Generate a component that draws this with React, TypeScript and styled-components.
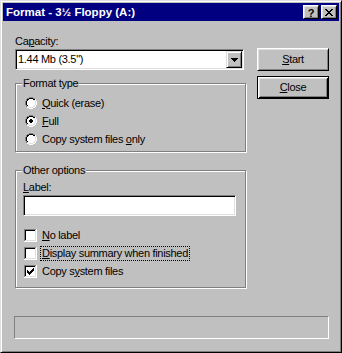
import React from 'react';
import styled, { createGlobalStyle } from 'styled-components';

const GlobalStyle = createGlobalStyle`
  html, body { margin: 0; padding: 0; background: #c0c0c0; }
  body { font-family: "Liberation Sans", Arial, sans-serif; font-size: 11px; }
  *, *::before, *::after { box-sizing: border-box; }
  u { text-decoration: underline; text-underline-offset: 1px; }
`;

const Window = styled.div`
  width: 342px;
  height: 353px;
  background: #c0c0c0;
  border-top: 1px solid #dfdfdf;
  border-left: 1px solid #dfdfdf;
  border-right: 1px solid #000;
  border-bottom: 1px solid #000;
  box-shadow: inset 1px 1px 0 #fff, inset -1px -1px 0 #808080;
  padding: 2px;
  display: flex;
  flex-direction: column;
  font-family: "Liberation Sans", Arial, sans-serif;
  font-size: 11px;
  letter-spacing: -0.3px;
  color: #000;
`;

const TitleBar = styled.div`
  height: 18px;
  background: #000080;
  display: flex;
  align-items: center;
  padding: 0 2px 0 3px;
`;

const Title = styled.div`
  flex: 1;
  color: #fff;
  font-weight: bold;
  font-size: 11.5px;
  letter-spacing: 0;
  line-height: 18px;
  white-space: nowrap;
`;

const TitleButtons = styled.div`
  display: flex;
  gap: 2px;
`;

const TitleButton = styled.div`
  width: 16px;
  height: 14px;
  background: #c0c0c0;
  border-top: 1px solid #fff;
  border-left: 1px solid #fff;
  border-right: 1px solid #000;
  border-bottom: 1px solid #000;
  box-shadow: inset 1px 1px 0 #dfdfdf, inset -1px -1px 0 #808080;
  display: flex;
  align-items: center;
  justify-content: center;
`;

const HelpMark = styled.span`
  font-weight: bold;
  font-size: 11px;
  line-height: 12px;
  letter-spacing: 0;
  padding-top: 1px;
`;

const Body = styled.div`
  flex: 1;
  display: flex;
  flex-direction: column;
  padding: 14px 10px 0 11px;
`;

const MainRow = styled.div`
  display: flex;
  align-items: flex-start;
`;

const LeftColumn = styled.div`
  width: 231px;
  margin-left: 1px;
  display: flex;
  flex-direction: column;
`;

const RightColumn = styled.div`
  width: 72px;
  margin-left: 11px;
  margin-top: 13px;
  display: flex;
  flex-direction: column;
  gap: 5px;
`;

const FieldLabel = styled.div<{ $indent?: number }>`
  line-height: 13px;
  height: 13px;
  padding-left: ${p => p.$indent ?? 0}px;
  white-space: nowrap;
`;

const Sunken = styled.div`
  background: #fff;
  border-top: 1px solid #808080;
  border-left: 1px solid #808080;
  border-right: 1px solid #fff;
  border-bottom: 1px solid #fff;
  box-shadow: inset 1px 1px 0 #000, inset -1px -1px 0 #dfdfdf;
  padding: 1px;
`;

const Combo = styled(Sunken)`
  width: 229px;
  height: 21px;
  margin-top: 1px;
  display: flex;
`;

const ComboText = styled.div`
  flex: 1;
  line-height: 17px;
  padding-left: 1px;
  white-space: nowrap;
`;

const DropButton = styled.div`
  width: 16px;
  height: 17px;
  background: #c0c0c0;
  border-top: 1px solid #dfdfdf;
  border-left: 1px solid #dfdfdf;
  border-right: 1px solid #000;
  border-bottom: 1px solid #000;
  box-shadow: inset 1px 1px 0 #fff, inset -1px -1px 0 #808080;
  display: flex;
  align-items: center;
  justify-content: center;
`;

const TextField = styled(Sunken)`
  width: 213px;
  height: 21px;
  margin: 1px 0 0 7px;
`;

const GroupBox = styled.div<{ $height: number; $gap: number }>`
  position: relative;
  height: ${p => p.$height}px;
  margin-top: ${p => p.$gap}px;
  border: 1px solid #808080;
  box-shadow: inset 1px 1px 0 #fff, 1px 1px 0 #fff;
  display: flex;
  flex-direction: column;
`;

const Legend = styled.div`
  position: absolute;
  top: -7px;
  left: 6px;
  padding: 0 1px;
  background: #c0c0c0;
  line-height: 13px;
  white-space: nowrap;
`;

const OptionList = styled.div<{ $top: number }>`
  margin-top: ${p => p.$top}px;
  display: flex;
  flex-direction: column;
`;

const OptionRow = styled.div<{ $indent: number }>`
  height: 18px;
  display: flex;
  align-items: center;
  padding-left: ${p => p.$indent}px;
`;

const OptionText = styled.span<{ $focused?: boolean; $gap: number }>`
  margin-left: ${p => p.$gap}px;
  padding: 0 1px;
  line-height: 13px;
  border: 1px ${p => (p.$focused ? 'dotted #000' : 'solid transparent')};
  white-space: nowrap;
`;

const CheckBoxBox = styled.div`
  width: 13px;
  height: 13px;
  background: #fff;
  box-shadow: inset -1px -1px 0 #fff, inset 1px 1px 0 #808080, inset -2px -2px 0 #dfdfdf, inset 2px 2px 0 #000;
  display: flex;
  flex-shrink: 0;
`;

const PushButton = styled.div<{ $default?: boolean }>`
  width: 72px;
  height: 23px;
  background: #c0c0c0;
  display: flex;
  align-items: center;
  justify-content: center;
  line-height: 13px;
  ${p =>
    p.$default
      ? `border: 1px solid #000;
         box-shadow: inset 1px 1px 0 #fff, inset -1px -1px 0 #000, inset 2px 2px 0 #dfdfdf, inset -2px -2px 0 #808080;`
      : `border-top: 1px solid #fff; border-left: 1px solid #fff;
         border-right: 1px solid #000; border-bottom: 1px solid #000;
         box-shadow: inset 1px 1px 0 #dfdfdf, inset -1px -1px 0 #808080;`}
`;

const ProgressBar = styled.div`
  width: 315px;
  height: 23px;
  margin-top: 28px;
  border-top: 1px solid #808080;
  border-left: 1px solid #808080;
  border-right: 1px solid #fff;
  border-bottom: 1px solid #fff;
`;

function CloseGlyph() {
  const rects: React.ReactElement[] = [];
  for (let r = 0; r < 7; r++) {
    const a = r;
    const b = 6 - r;
    rects.push(<rect key={`a${r}`} x={a} y={r} width={2} height={1} />);
    if (a !== b) rects.push(<rect key={`b${r}`} x={b} y={r} width={2} height={1} />);
  }
  return (
    <svg width="8" height="7" viewBox="0 0 8 7" shapeRendering="crispEdges" fill="#000">
      {rects}
    </svg>
  );
}

function DownArrow() {
  return (
    <svg width="7" height="4" viewBox="0 0 7 4" shapeRendering="crispEdges" fill="#000">
      <rect x={0} y={0} width={7} height={1} />
      <rect x={1} y={1} width={5} height={1} />
      <rect x={2} y={2} width={3} height={1} />
      <rect x={3} y={3} width={1} height={1} />
    </svg>
  );
}

function Radio({ checked }: { checked?: boolean }) {
  return (
    <svg width="12" height="12" viewBox="0 0 12 12" shapeRendering="crispEdges" style={{ flexShrink: 0 }}>
      <rect x={2} y={2} width={8} height={8} fill="#fff" />
      <path fillRule="evenodd" d="M8 0H4V1H2V2H1V4H0V8H1V10H2V8H1V4H2V2H4V1H8V2H10V1H8V0Z" fill="#808080" />
      <path fillRule="evenodd" d="M8 1H4V2H2V4H1V8H2V9H3V8H2V4H3V3H4V2H8V3H10V2H8V1Z" fill="#000" />
      <path fillRule="evenodd" d="M9 3H10V4H9V3ZM10 8V4H11V8H10ZM8 10V9H9V8H10V10H8ZM4 10V11H8V10H4ZM4 10V9H2V10H4Z" fill="#dfdfdf" />
      <path fillRule="evenodd" d="M11 2H10V4H11V8H10V10H8V11H4V10H2V11H4V12H8V11H10V10H11V8H12V4H11V2Z" fill="#fff" />
      {checked && (
        <g fill="#000">
          <rect x={5} y={4} width={2} height={4} />
          <rect x={4} y={5} width={4} height={2} />
        </g>
      )}
    </svg>
  );
}

function CheckBox({ checked }: { checked?: boolean }) {
  const tops = [2, 3, 4, 3, 2, 1, 0];
  return (
    <CheckBoxBox>
      {checked && (
        <svg width="13" height="13" viewBox="0 0 13 13" shapeRendering="crispEdges" fill="#000">
          {tops.map((t, c) => (
            <rect key={c} x={3 + c} y={3 + t} width={1} height={3} />
          ))}
        </svg>
      )}
    </CheckBoxBox>
  );
}

export default function App() {
  return (
    <>
      <GlobalStyle />
      <Window>
        <TitleBar>
          <Title>Format - 3½ Floppy (A:)</Title>
          <TitleButtons>
            <TitleButton aria-label="Help">
              <HelpMark>?</HelpMark>
            </TitleButton>
            <TitleButton aria-label="Close">
              <CloseGlyph />
            </TitleButton>
          </TitleButtons>
        </TitleBar>
        <Body>
          <MainRow>
            <LeftColumn>
              <FieldLabel>
                Ca<u>p</u>acity:
              </FieldLabel>
              <Combo>
                <ComboText>1.44 Mb (3.5")</ComboText>
                <DropButton>
                  <DownArrow />
                </DropButton>
              </Combo>

              <GroupBox $height={69} $gap={13}>
                <Legend>Format type</Legend>
                <OptionList $top={10}>
                  <OptionRow $indent={9}>
                    <Radio />
                    <OptionText $gap={3}>
                      <u>Q</u>uick (erase)
                    </OptionText>
                  </OptionRow>
                  <OptionRow $indent={9}>
                    <Radio checked />
                    <OptionText $gap={3}>
                      <u>F</u>ull
                    </OptionText>
                  </OptionRow>
                  <OptionRow $indent={9}>
                    <Radio />
                    <OptionText $gap={3}>
                      Copy system files <u>o</u>nly
                    </OptionText>
                  </OptionRow>
                </OptionList>
              </GroupBox>

              <GroupBox $height={118} $gap={18}>
                <Legend>Other options</Legend>
                <OptionList $top={10}>
                  <FieldLabel $indent={7}>
                    <u>L</u>abel:
                  </FieldLabel>
                  <TextField />
                </OptionList>
                <OptionList $top={10}>
                  <OptionRow $indent={8}>
                    <CheckBox />
                    <OptionText $gap={3}>
                      <u>N</u>o label
                    </OptionText>
                  </OptionRow>
                  <OptionRow $indent={8}>
                    <CheckBox />
                    <OptionText $gap={3} $focused>
                      <u>D</u>isplay summary when finished
                    </OptionText>
                  </OptionRow>
                  <OptionRow $indent={8}>
                    <CheckBox checked />
                    <OptionText $gap={3}>
                      Copy s<u>y</u>stem files
                    </OptionText>
                  </OptionRow>
                </OptionList>
              </GroupBox>
            </LeftColumn>
            <RightColumn>
              <PushButton>
                <span>
                  <u>S</u>tart
                </span>
              </PushButton>
              <PushButton $default>
                <span>
                  <u>C</u>lose
                </span>
              </PushButton>
            </RightColumn>
          </MainRow>
          <ProgressBar />
        </Body>
      </Window>
    </>
  );
}
